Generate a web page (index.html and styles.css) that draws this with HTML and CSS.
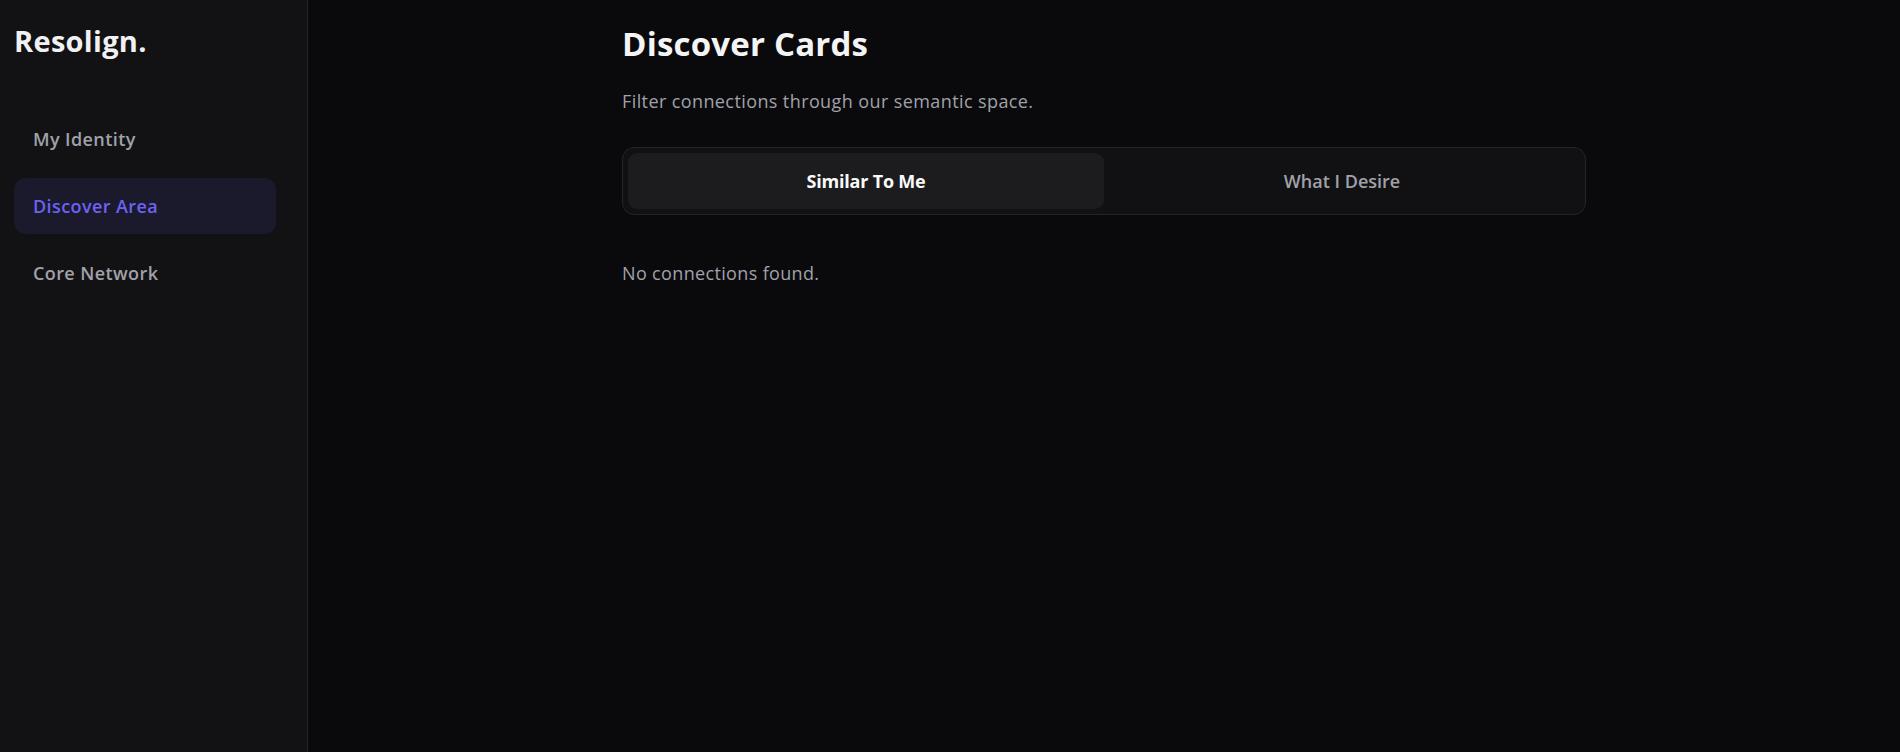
FILE: index.html
```html
<!DOCTYPE html>
<html lang="en">
<head>
    <meta charset="UTF-8">
    <meta name="viewport" content="width=device-width, initial-scale=1.0">
    <title>Resolign - Discover</title>
    <link rel="stylesheet" href="styles.css">
</head>
<body>
    <aside class="sidebar">
        <div class="logo">Resolign.</div>
        <nav class="nav">
            <a class="nav-item" href="#">My Identity</a>
            <a class="nav-item active" href="#">Discover Area</a>
            <a class="nav-item" href="#">Core Network</a>
        </nav>
    </aside>

    <main class="main">
        <div class="content">
            <h1>Discover Cards</h1>
            <p class="subtitle">Filter connections through our semantic space.</p>

            <div class="tabs">
                <button class="tab active">Similar To Me</button>
                <button class="tab">What I Desire</button>
            </div>

            <p class="empty">No connections found.</p>
        </div>
    </main>
</body>
</html>
```

FILE: styles.css
```css
* {
    box-sizing: border-box;
}
html, body {
    height: 100%;
}
body {
    margin: 0;
    display: flex;
    font-family: "Open Sans", Lato, sans-serif;
    background: #0a0a0c;
    color: #f4f4f5;
}
.sidebar {
    width: 308px;
    flex-shrink: 0;
    background: #121214;
    border-right: 1px solid #242427;
    padding: 21px 31px 0 14px;
}
.logo {
    font-size: 29px;
    font-weight: 700;
    color: #f1f1f3;
    line-height: 40px;
    letter-spacing: 0.3px;
}
.nav {
    display: flex;
    flex-direction: column;
    gap: 11px;
    margin-top: 50px;
}
.nav-item {
    display: flex;
    align-items: center;
    height: 56px;
    padding: 0 19px;
    border-radius: 12px;
    font-size: 18px;
    font-weight: 600;
    color: #a1a1aa;
    text-decoration: none;
    letter-spacing: 0.4px;
}
.nav-item.active {
    background: #1a1a2c;
    color: #6e62f2;
}
.main {
    flex: 1;
    display: flex;
    justify-content: center;
}
.content {
    width: 964px;
    padding-top: 22px;
}
h1 {
    margin: 0;
    font-size: 33px;
    font-weight: 700;
    line-height: 44px;
    color: #f4f4f5;
    letter-spacing: 0.2px;
}
.subtitle {
    margin: 22px 0 0;
    font-size: 18px;
    line-height: 26px;
    color: #a1a1aa;
    letter-spacing: 0.4px;
}
.tabs {
    display: flex;
    margin-top: 33px;
    height: 68px;
    padding: 5px;
    background: #111113;
    border: 1px solid #232326;
    border-radius: 12px;
}
.tab {
    flex: 1;
    border: none;
    border-radius: 9px;
    background: transparent;
    font-family: inherit;
    font-size: 18px;
    font-weight: 600;
    color: #a1a1aa;
    cursor: pointer;
}
.tab.active {
    background: #1c1c1f;
    color: #fafafa;
    font-weight: 700;
    letter-spacing: -0.2px;
}
.empty {
    margin: 45px 0 0;
    font-size: 18px;
    line-height: 26px;
    color: #a1a1aa;
    letter-spacing: 0.35px;
}
```
